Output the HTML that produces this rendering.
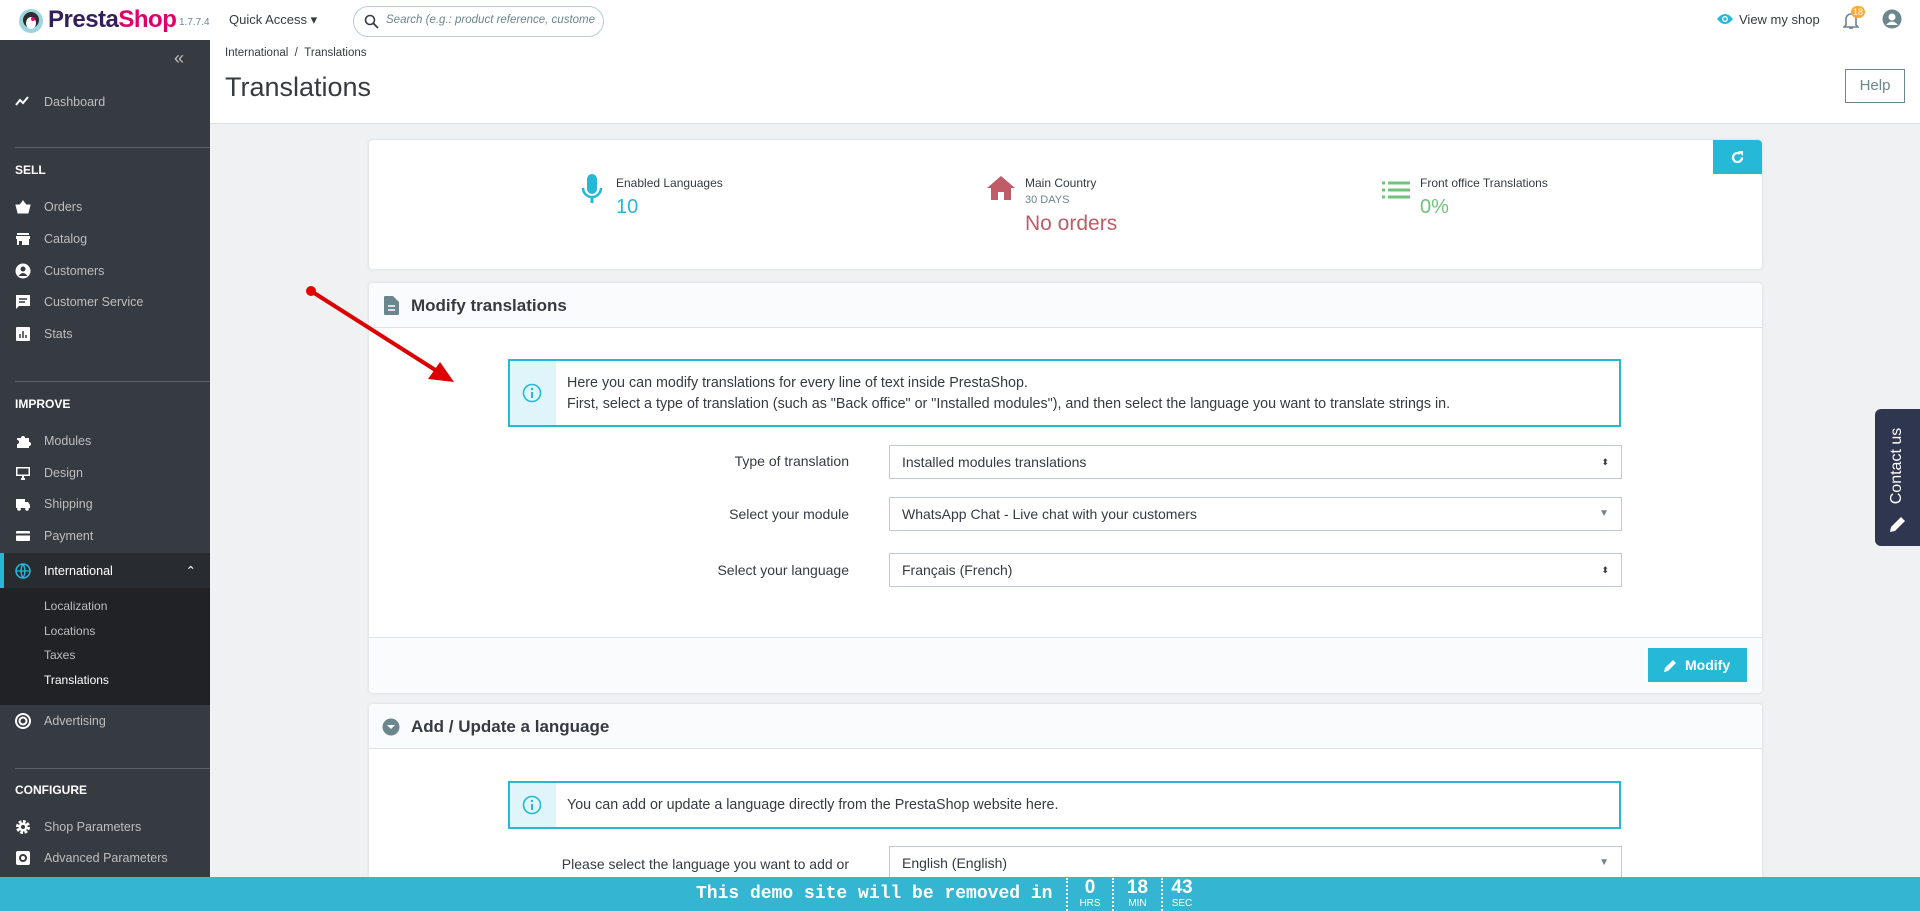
<!DOCTYPE html>
<html style="overflow:hidden;height:911px"><head><meta charset="utf-8"><style>
*{box-sizing:border-box;margin:0;padding:0}
body{width:1920px;height:911px;overflow:hidden;font-family:"Liberation Sans",sans-serif;background:#eff1f2;position:relative;color:#363a41}
.abs{position:absolute}
#top{left:0;top:0;width:1920px;height:40px;background:#fff}
#side{left:0;top:40px;width:210px;height:871px;background:#363a41;color:#bebebe;font-size:12.5px}
.it{position:absolute;left:0;width:210px;height:30px;line-height:30px;padding-left:44px;color:#bebebe}
.it svg{position:absolute;left:15px;top:7px}
.sec{position:absolute;left:15px;color:#fff;font-weight:bold;font-size:12px}
.div{position:absolute;left:15px;width:195px;border-top:1px solid #5d6066}
.sub{position:absolute;left:44px;font-size:12px;color:#bebebe}
#head{left:210px;top:40px;width:1710px;height:84px;background:#fff;border-bottom:1px solid #dfdfdf}
.card{position:absolute;left:369px;width:1393px;background:#fff;border-radius:4px;box-shadow:0 0 3px #d5d8dc;overflow:hidden}
.ch{height:45px;background:#fafbfc;border-bottom:1px solid #dfe3e6;position:relative;font-size:17px;font-weight:bold;line-height:45px;padding-left:42px;color:#363a41}
.info{position:absolute;left:139px;width:1113px;border:2px solid #25b9d7;background:#fff;font-size:14.3px;color:#363a41}
.info .ic{position:absolute;left:0;top:0;bottom:0;width:46px;background:#dff5f9}
.lab{position:absolute;width:480px;left:0;text-align:right;font-size:14px;color:#363a41}
.sel{position:absolute;left:520px;width:733px;height:34px;border:1px solid #bbcdd2;font-size:14px;line-height:32px;padding-left:12px;color:#363a41;background:#fff}
</style></head><body>

<div id="top" class="abs">
 <svg class="abs" style="left:18px;top:8px" width="26" height="26" viewBox="0 0 26 26"><circle cx="13" cy="13" r="12" fill="#9cd4e0"/><circle cx="13" cy="12" r="8" fill="#2d2d2d"/><ellipse cx="13" cy="15" rx="5" ry="6" fill="#fff"/><circle cx="15" cy="11" r="2" fill="#e6007e"/></svg>
 <div class="abs" style="left:48px;top:6px;font-size:24px;font-weight:bold;letter-spacing:-0.5px;color:#341f5a">Presta<span style="color:#df0067">Shop</span></div>
 <div class="abs" style="left:179px;top:17px;font-size:10px;color:#6c868e">1.7.7.4</div>
 <div class="abs" style="left:229px;top:12px;font-size:13px;color:#363a41">Quick Access ▾</div>
 <div class="abs" style="left:353px;top:6px;width:251px;height:31px;border:1px solid #bbcdd2;border-radius:16px;background:#fff">
  <svg class="abs" style="left:10px;top:7px" width="15" height="15" viewBox="0 0 15 15"><circle cx="6" cy="6" r="4.5" stroke="#363a41" stroke-width="1.6" fill="none"/><path d="M9.5 9.5L14 14" stroke="#363a41" stroke-width="1.8"/></svg>
  <div class="abs" style="left:32px;top:7px;font-size:11.5px;font-style:italic;color:#6c868e;white-space:nowrap;width:210px;overflow:hidden">Search (e.g.: product reference, custome</div>
 </div>
 <svg class="abs" style="left:1716px;top:12px" width="18" height="14" viewBox="0 0 18 14"><path d="M1 7Q9 -3 17 7Q9 17 1 7Z" fill="#25b9d7"/><circle cx="9" cy="7" r="3" fill="#fff"/><circle cx="9" cy="7" r="1.6" fill="#25b9d7"/></svg>
 <div class="abs" style="left:1739px;top:12px;font-size:13px;color:#363a41">View my shop</div>
 <svg class="abs" style="left:1843px;top:12px" width="16" height="18" viewBox="0 0 16 18"><path d="M3 13V7a5 5 0 0110 0v6l2 2H1z" fill="none" stroke="#6c868e" stroke-width="1.6"/><path d="M6 16h4" stroke="#6c868e" stroke-width="1.6"/></svg>
 <div class="abs" style="left:1851px;top:6px;width:14px;height:12px;border-radius:6px;background:#fbaa3b;color:#fff;font-size:9px;text-align:center;line-height:12px">18</div>
 <svg class="abs" style="left:1882px;top:9px" width="20" height="20" viewBox="0 0 20 20"><circle cx="10" cy="10" r="9.5" fill="#6c868e"/><circle cx="10" cy="8" r="3.5" fill="#fff"/><path d="M4 16q6-7 12 0" fill="#fff"/></svg>
</div>

<div id="side" class="abs">
 <div class="abs" style="left:174px;top:8px;font-size:18px;color:#bebebe">«</div>
 <div class="it" style="top:47px"><svg width="16" height="14" viewBox="0 0 16 14"><path d="M1 11l4-5 3 3 5-6" stroke="#fff" stroke-width="2" fill="none"/></svg>Dashboard</div>
 <div class="div" style="top:107px"></div>
 <div class="sec" style="top:123px">SELL</div>
 <div class="it" style="top:152px"><svg width="16" height="16" viewBox="0 0 16 16"><path d="M1 6h14l-2 8H3z M5 6l3-4 3 4" fill="#fff" stroke="#fff"/></svg>Orders</div>
 <div class="it" style="top:184px"><svg width="16" height="16" viewBox="0 0 16 16"><path d="M2 2h12v2H2zM1 5h14v3H1zM2 8h12v6H2z" fill="#fff"/><rect x="4" y="10" width="3" height="4" fill="#363a41"/></svg>Catalog</div>
 <div class="it" style="top:216px"><svg width="16" height="16" viewBox="0 0 16 16"><circle cx="8" cy="8" r="7.5" fill="#fff"/><circle cx="8" cy="6" r="2.5" fill="#363a41"/><path d="M3.5 13q4.5-6 9 0" fill="#363a41"/></svg>Customers</div>
 <div class="it" style="top:247px"><svg width="16" height="16" viewBox="0 0 16 16"><path d="M1 1h14v11H4l-3 3z" fill="#fff"/><path d="M4 5h8M4 8h6" stroke="#363a41" stroke-width="1.4"/></svg>Customer Service</div>
 <div class="it" style="top:279px"><svg width="16" height="16" viewBox="0 0 16 16"><rect x="1" y="1" width="14" height="14" rx="1" fill="#fff"/><path d="M5 12V8M8 12V5M11 12V9" stroke="#363a41" stroke-width="1.5"/></svg>Stats</div>
 <div class="div" style="top:341px"></div>
 <div class="sec" style="top:357px">IMPROVE</div>
 <div class="it" style="top:386px"><svg width="16" height="16" viewBox="0 0 16 16"><path d="M2 5h4a2 2 0 114 0h4v4a2 2 0 110 4v2H2v-4a2 2 0 100-4z" fill="#fff"/></svg>Modules</div>
 <div class="it" style="top:418px"><svg width="16" height="16" viewBox="0 0 16 16"><rect x="1" y="2" width="14" height="9" fill="#fff"/><rect x="2.5" y="3.5" width="11" height="6" fill="#363a41"/><path d="M6 14h4M8 11v3" stroke="#fff" stroke-width="2"/></svg>Design</div>
 <div class="it" style="top:449px"><svg width="16" height="16" viewBox="0 0 16 16"><path d="M1 3h9v9H1zM10 6h3l2 3v3h-5z" fill="#fff"/><circle cx="4" cy="13" r="1.8" fill="#fff"/><circle cx="12" cy="13" r="1.8" fill="#fff"/></svg>Shipping</div>
 <div class="it" style="top:481px"><svg width="16" height="16" viewBox="0 0 16 16"><rect x="1" y="3" width="14" height="10" rx="1" fill="#fff"/><rect x="1" y="5.5" width="14" height="2" fill="#363a41"/></svg>Payment</div>
 <div class="abs" style="left:0;top:513px;width:210px;height:35px;background:#282b30;border-left:4px solid #25b9d7"></div>
 <div class="it" style="top:516px;color:#fff"><svg width="16" height="16" viewBox="0 0 16 16"><circle cx="8" cy="8" r="7" stroke="#25b9d7" stroke-width="1.5" fill="none"/><path d="M1 8h14M8 1q-4 7 0 14M8 1q4 7 0 14" stroke="#25b9d7" stroke-width="1.3" fill="none"/></svg>International<span style="position:absolute;right:14px;top:0">⌃</span></div>
 <div class="abs" style="left:0;top:548px;width:210px;height:117px;background:#202226"></div>
 <div class="sub" style="top:559px">Localization</div>
 <div class="sub" style="top:584px">Locations</div>
 <div class="sub" style="top:608px">Taxes</div>
 <div class="sub" style="top:633px;color:#fff">Translations</div>
 <div class="it" style="top:666px"><svg width="16" height="16" viewBox="0 0 16 16"><circle cx="8" cy="8" r="7" stroke="#fff" stroke-width="2" fill="none"/><circle cx="8" cy="8" r="3.5" stroke="#fff" stroke-width="2" fill="none"/></svg>Advertising</div>
 <div class="div" style="top:728px"></div>
 <div class="sec" style="top:743px">CONFIGURE</div>
 <div class="it" style="top:772px"><svg width="16" height="16" viewBox="0 0 16 16"><circle cx="8" cy="8" r="5" stroke="#fff" stroke-width="4" stroke-dasharray="2.5 1.4" fill="none"/><circle cx="8" cy="8" r="4.5" fill="#fff"/><circle cx="8" cy="8" r="2" fill="#363a41"/></svg>Shop Parameters</div>
 <div class="it" style="top:803px"><svg width="16" height="16" viewBox="0 0 16 16"><rect x="1" y="1" width="14" height="14" rx="2" fill="#fff"/><circle cx="8" cy="8" r="3" stroke="#363a41" stroke-width="2" fill="none"/></svg>Advanced Parameters</div>
</div>

<div id="head" class="abs">
 <div class="abs" style="left:15px;top:7px;font-size:11.5px;color:#363a41">International &nbsp;/ &nbsp;Translations</div>
 <div class="abs" style="left:15px;top:32px;font-size:27px;color:#363a41">Translations</div>
 <div class="abs" style="left:1635px;top:29px;width:60px;height:34px;border:1px solid #6c868e;font-size:15px;line-height:32px;text-align:center;color:#6c868e">Help</div>
</div>

<div class="card" style="top:140px;height:129px">
 <div class="abs" style="right:0;top:0;width:49px;height:34px;background:#25b9d7"><svg class="abs" style="left:17px;top:10px" width="15" height="15" viewBox="0 0 15 15"><path d="M12 7.5A4.5 4.5 0 1110 3.8" stroke="#fff" stroke-width="2.2" fill="none"/><path d="M8 1h5v5z" fill="#fff"/></svg></div>
 <svg class="abs" style="left:211px;top:34px" width="24" height="30" viewBox="0 0 24 30"><rect x="7" y="0" width="10" height="20" rx="5" fill="#25b9d7"/><path d="M3 14a9 9 0 0018 0" stroke="#25b9d7" stroke-width="2.5" fill="none"/><path d="M12 23v6" stroke="#25b9d7" stroke-width="3"/></svg>
 <div class="abs" style="left:247px;top:36px;font-size:12px;color:#363a41">Enabled Languages</div>
 <div class="abs" style="left:247px;top:56px;font-size:20px;color:#25b9d7">10</div>
 <svg class="abs" style="left:617px;top:35px" width="30" height="26" viewBox="0 0 30 26"><path d="M15 1L1 13h4v12h7v-8h6v8h7V13h4z" fill="#c05c67"/></svg>
 <div class="abs" style="left:656px;top:36px;font-size:12px;color:#363a41">Main Country</div>
 <div class="abs" style="left:656px;top:54px;font-size:11px;color:#6c868e">30 DAYS</div>
 <div class="abs" style="left:656px;top:72px;font-size:21px;color:#c05c67">No orders</div>
 <svg class="abs" style="left:1013px;top:41px" width="28" height="18" viewBox="0 0 28 18"><path d="M0 2h3M0 9h3M0 16h3M6 2h22M6 9h22M6 16h22" stroke="#72c279" stroke-width="3"/></svg>
 <div class="abs" style="left:1051px;top:36px;font-size:12px;color:#363a41">Front office Translations</div>
 <div class="abs" style="left:1051px;top:56px;font-size:20px;color:#72c279">0%</div>
</div>

<div class="card" style="top:283px;height:410px">
 <div class="ch"><svg class="abs" style="left:15px;top:13px" width="15" height="19" viewBox="0 0 15 19"><path d="M0 1a1 1 0 011-1h8l6 6v12a1 1 0 01-1 1H1a1 1 0 01-1-1z" fill="#6c868e"/><path d="M4 10h7M4 14h7" stroke="#fff" stroke-width="1.6"/></svg>Modify translations</div>
 <div class="info" style="top:76px;height:68px"><div class="ic"><svg class="abs" style="left:12px;top:22px" width="20" height="20" viewBox="0 0 20 20"><circle cx="10" cy="10" r="8.5" stroke="#25b9d7" stroke-width="1.6" fill="none"/><path d="M10 9v6" stroke="#25b9d7" stroke-width="2"/><circle cx="10" cy="6" r="1.2" fill="#25b9d7"/></svg></div>
  <div class="abs" style="left:57px;top:12px;line-height:21px;white-space:nowrap">Here you can modify translations for every line of text inside PrestaShop.<br>First, select a type of translation (such as "Back office" or "Installed modules"), and then select the language you want to translate strings in.</div></div>
 <div class="lab" style="top:170px">Type of translation</div>
 <div class="sel" style="top:162px">Installed modules translations<span style="position:absolute;right:12px;top:0;font-size:9px">⬍</span></div>
 <div class="lab" style="top:223px">Select your module</div>
 <div class="sel" style="top:214px">WhatsApp Chat - Live chat with your customers<span style="position:absolute;right:12px;top:0;font-size:10px;color:#6c868e">▼</span></div>
 <div class="lab" style="top:279px">Select your language</div>
 <div class="sel" style="top:270px">Français (French)<span style="position:absolute;right:12px;top:0;font-size:9px">⬍</span></div>
 <div class="abs" style="left:0;top:354px;width:1393px;height:56px;background:#fafbfc;border-top:1px solid #dfe3e6"></div>
 <div class="abs" style="left:1279px;top:365px;width:99px;height:34px;background:#25b9d7;color:#fff;font-size:14px;font-weight:bold;line-height:34px;padding-left:37px"><svg class="abs" style="left:15px;top:10px" width="15" height="15" viewBox="0 0 15 15"><path d="M1 14l1-4 8-8 3 3-8 8z" fill="#fff"/></svg>Modify</div>
</div>

<div class="card" style="top:704px;height:173px;border-radius:4px 4px 0 0">
 <div class="ch"><svg class="abs" style="left:13px;top:14px" width="18" height="18" viewBox="0 0 18 18"><circle cx="9" cy="9" r="8.5" fill="#6c868e"/><path d="M5 7l4 4 4-4" fill="#fff"/></svg>Add / Update a language</div>
 <div class="info" style="top:77px;height:48px"><div class="ic"><svg class="abs" style="left:12px;top:12px" width="20" height="20" viewBox="0 0 20 20"><circle cx="10" cy="10" r="8.5" stroke="#25b9d7" stroke-width="1.6" fill="none"/><path d="M10 9v6" stroke="#25b9d7" stroke-width="2"/><circle cx="10" cy="6" r="1.2" fill="#25b9d7"/></svg></div>
  <div class="abs" style="left:57px;top:14px">You can add or update a language directly from the PrestaShop website here.</div></div>
 <div class="lab" style="top:152px">Please select the language you want to add or</div>
 <div class="sel" style="top:142px">English (English)<span style="position:absolute;right:12px;top:0;font-size:10px;color:#6c868e">▼</span></div>
</div>

<svg class="abs" style="left:300px;top:280px" width="170" height="115" viewBox="0 0 170 115"><circle cx="11" cy="11" r="5" fill="#e00"/><path d="M11 11L140 93" stroke="#d00" stroke-width="4"/><path d="M154 102L128 99L140 82Z" fill="#d00"/></svg>

<div class="abs" style="left:1875px;top:409px;width:45px;height:137px;background:#2f3650;border-radius:6px 0 0 6px">
 <div class="abs" style="top:48px;transform:rotate(-90deg);color:#fff;font-size:16px;white-space:nowrap;width:90px;text-align:center;left:-23px">Contact us</div>
 <svg class="abs" style="left:14px;top:106px" width="18" height="18" viewBox="0 0 18 18"><path d="M1 17l1-5 10-10 4 4-10 10z" fill="#fff"/></svg>
</div>

<div class="abs" style="left:0;top:877px;width:1920px;height:34px;background:#34b6d3;color:#fff">
 <div class="abs" style="left:696px;top:7px;font-family:'Liberation Mono',monospace;font-weight:bold;font-size:18px;white-space:nowrap">This demo site will be removed in</div>
 <div class="abs" style="left:1066px;top:1px;height:33px;border-left:2px dotted #fff"></div>
 <div class="abs" style="left:1112px;top:1px;height:33px;border-left:2px dotted #fff"></div>
 <div class="abs" style="left:1161px;top:1px;height:33px;border-left:2px dotted #fff"></div>
 <div class="abs" style="left:1068px;top:0;width:44px;text-align:center;font-weight:bold;font-size:19px;line-height:21px">0<div style="font-size:10px;font-weight:normal;line-height:12px">HRS</div></div>
 <div class="abs" style="left:1114px;top:0;width:47px;text-align:center;font-weight:bold;font-size:19px;line-height:21px">18<div style="font-size:10px;font-weight:normal;line-height:12px">MIN</div></div>
 <div class="abs" style="left:1163px;top:0;width:38px;text-align:center;font-weight:bold;font-size:19px;line-height:21px">43<div style="font-size:10px;font-weight:normal;line-height:12px">SEC</div></div>
</div>
</body></html>
